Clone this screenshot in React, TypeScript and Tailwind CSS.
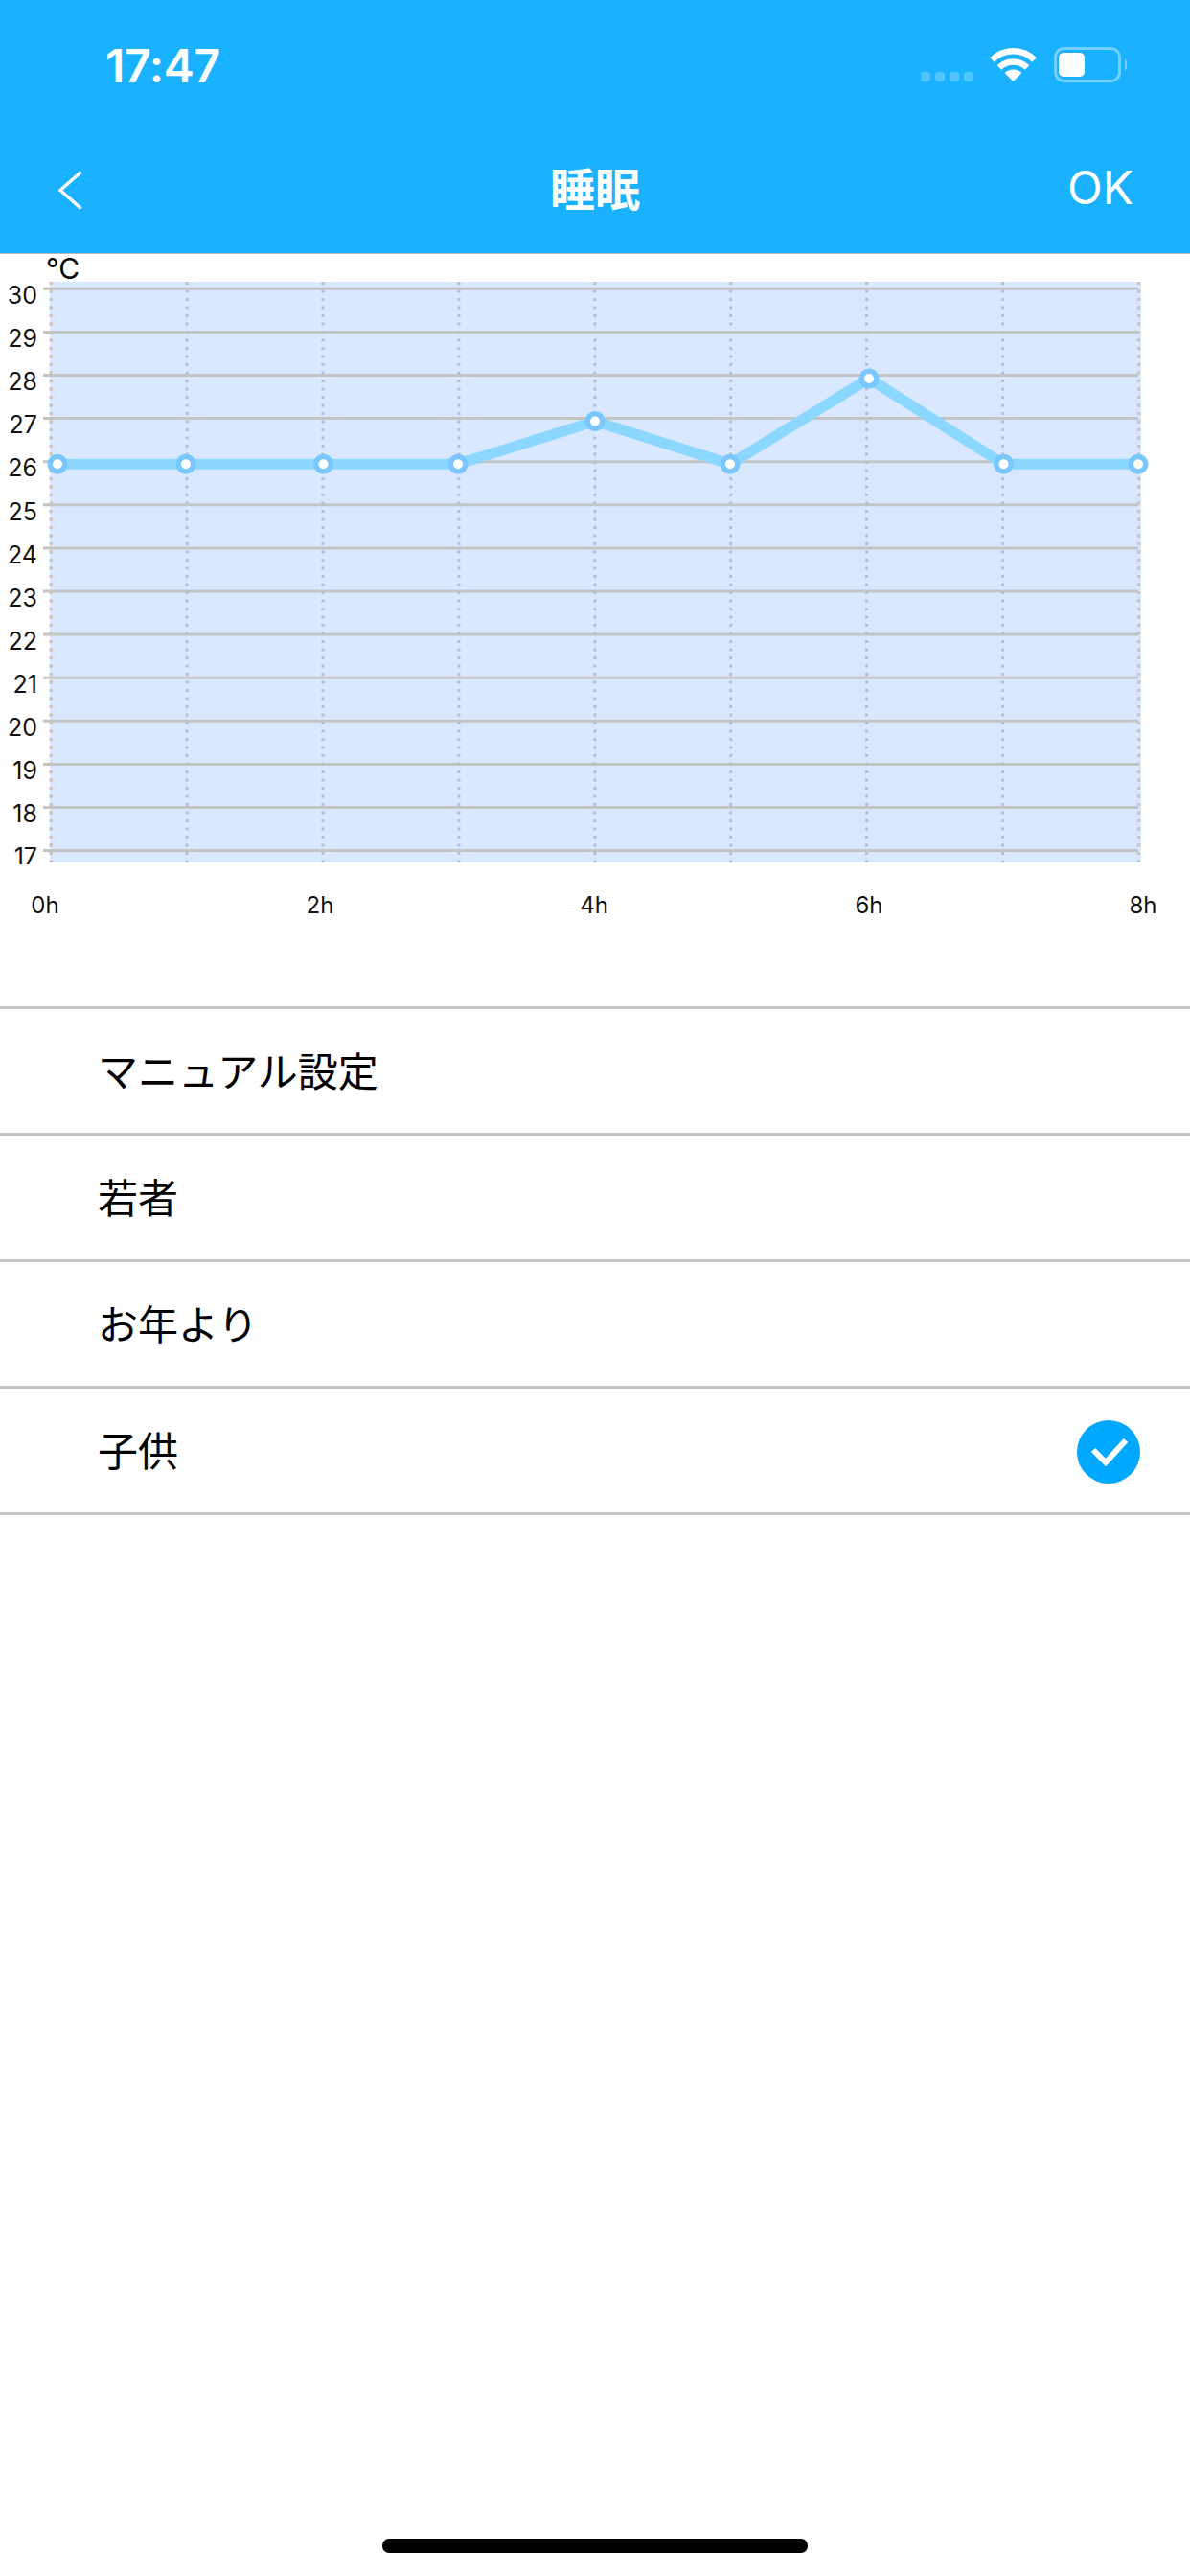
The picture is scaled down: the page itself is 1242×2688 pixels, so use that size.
import React from "react";

const temps = [30, 29, 28, 27, 26, 25, 24, 23, 22, 21, 20, 19, 18, 17];
const hours = [
  { label: "0h", x: 47 },
  { label: "2h", x: 334 },
  { label: "4h", x: 620 },
  { label: "6h", x: 907 },
  { label: "8h", x: 1193 },
];
const points = [
  [60, 484.3],
  [194, 484.3],
  [337.5, 484.3],
  [478, 484.3],
  [621, 439.5],
  [762, 484.3],
  [907, 395],
  [1047.5, 484.3],
  [1188, 484.3],
];
const rows = [
  { label: "マニュアル設定", checked: false },
  { label: "若者", checked: false },
  { label: "お年より", checked: false },
  { label: "子供", checked: true },
];

const StatusBar = () => (
  <div className="flex h-[138px] items-start pl-[110px] pr-[64px] pt-[42px]">
    <span className="text-[48px] font-semibold leading-[54px] tracking-[-0.3px] text-white">17:47</span>
    <div className="ml-auto flex items-start pt-[7px]">
      <div className="mt-[26px] flex gap-[5px]">
        {[0, 1, 2, 3].map((i) => (
          <span key={i} className="h-[10px] w-[10px] rounded-[3px] bg-white/25" />
        ))}
      </div>
      <svg width="49" height="36" viewBox="0 0 49 36" className="ml-[17px]">
        <path d="M24.5 36 L15.5 27 A13 13 0 0 1 33.5 27 Z" fill="white" />
        <path d="M10 21.5 A20.5 20.5 0 0 1 39 21.5" fill="none" stroke="white" strokeWidth="6.5" />
        <path d="M2.5 13.5 A31 31 0 0 1 46.5 13.5" fill="none" stroke="white" strokeWidth="6.5" />
      </svg>
      <svg width="78" height="37" viewBox="0 0 78 37" className="ml-[18px]">
        <rect x="1.5" y="1.5" width="67" height="34" rx="9" fill="none" stroke="white" strokeOpacity="0.4" strokeWidth="3" />
        <rect x="5" y="6" width="27" height="25" rx="5" fill="white" />
        <path d="M74 12 C77 14 77 23 74 25 Z" fill="white" fillOpacity="0.4" />
      </svg>
    </div>
  </div>
);

const NavBar = () => (
  <div className="grid h-[126px] grid-cols-3 items-start">
    <div className="pl-[60px] pt-[40px]">
      <svg width="26" height="41" viewBox="0 0 26 41" className="block">
        <path d="M24.5 1.5 L3 20.5 L24.5 39.5" fill="none" stroke="white" strokeWidth="3.4" />
      </svg>
    </div>
    <h1 className="pt-[33px] text-center text-[47px] font-bold leading-[54px] text-white">睡眠</h1>
    <div className="pr-[59px] pt-[31px] text-right text-[48px] leading-[54px] text-white">OK</div>
  </div>
);

const Chart = () => (
  <svg width="1242" height="785" viewBox="0 265 1242 785" className="block overflow-visible">
    <defs>
      <clipPath id="labels">
        <rect x="0" y="265" width="50" height="637" />
      </clipPath>
    </defs>
    <text x="48" y="291" fontSize="30" fill="#000">°C</text>
    <rect x="52" y="294" width="1139" height="606" fill="#d9e8ff" />
    {temps.map((t, i) => (
      <line key={t} x1="45" x2="1188" y1={301.3 + i * 45.1} y2={301.3 + i * 45.1} stroke="#c4c4c4" strokeWidth="3" />
    ))}
    {[0, 1, 2, 3, 4, 5, 6, 7, 8].map((i) => (
      <line
        key={i}
        x1={53.2 + i * 141.9}
        x2={53.2 + i * 141.9}
        y1="294"
        y2="900"
        stroke="#b8bfcc"
        strokeWidth="3"
        strokeDasharray="3 5.5"
      />
    ))}
    <line x1="53.2" x2="53.2" y1="294" y2="900" stroke="#cfc4b8" strokeWidth="3" strokeDasharray="3 5.5" />
    <line x1="1188.4" x2="1188.4" y1="294" y2="900" stroke="#cfc4b8" strokeWidth="3" strokeDasharray="3 5.5" />
    <g clipPath="url(#labels)">
      {temps.map((t, i) => (
        <text key={t} x="39" y={317 + i * 45.1} textAnchor="end" fontSize="25" fill="#111">
          {t}
        </text>
      ))}
    </g>
    <polyline
      points={points.map((p) => p.join(",")).join(" ")}
      fill="none"
      stroke="#8bd7ff"
      strokeWidth="11"
      strokeLinejoin="round"
    />
    {points.map(([x, y]) => (
      <circle key={x} cx={x} cy={y} r="7.8" fill="white" stroke="#7ac6ff" strokeWidth="5.5" />
    ))}
    {hours.map((h) => (
      <text key={h.label} x={h.x} y="953" textAnchor="middle" fontSize="24" fill="#111">
        {h.label}
      </text>
    ))}
  </svg>
);

const CheckBadge = () => (
  <svg width="66" height="66" viewBox="0 0 66 66" className="mt-[3px]">
    <circle cx="33" cy="33" r="33" fill="#00a8ff" />
    <path d="M17 31 L30 44 L51 21" fill="none" stroke="white" strokeWidth="6" />
  </svg>
);

export default function App() {
  return (
    <div
      className="flex min-h-[2688px] w-[1242px] flex-col bg-white"
      style={{ fontFamily: 'Inter, "Noto Sans CJK JP", sans-serif' }}
    >
      <header className="border-b border-[#b9b9b9] bg-[#1ab1ff]">
        <StatusBar />
        <NavBar />
      </header>
      <Chart />
      <ul className="border-t-[3px] border-[#c4c4c4]">
        {rows.map((row) => (
          <li
            key={row.label}
            className="flex h-[132px] items-center justify-between border-b-[3px] border-[#c4c4c4] pl-[102px] pr-[52px] text-[42px] text-black"
          >
            <span className="pt-[2px]">{row.label}</span>
            {row.checked && <CheckBadge />}
          </li>
        ))}
      </ul>
      <div className="mt-auto flex justify-center pb-[24px]">
        <div className="h-[15px] w-[444px] rounded-[7px] bg-black" />
      </div>
    </div>
  );
}
